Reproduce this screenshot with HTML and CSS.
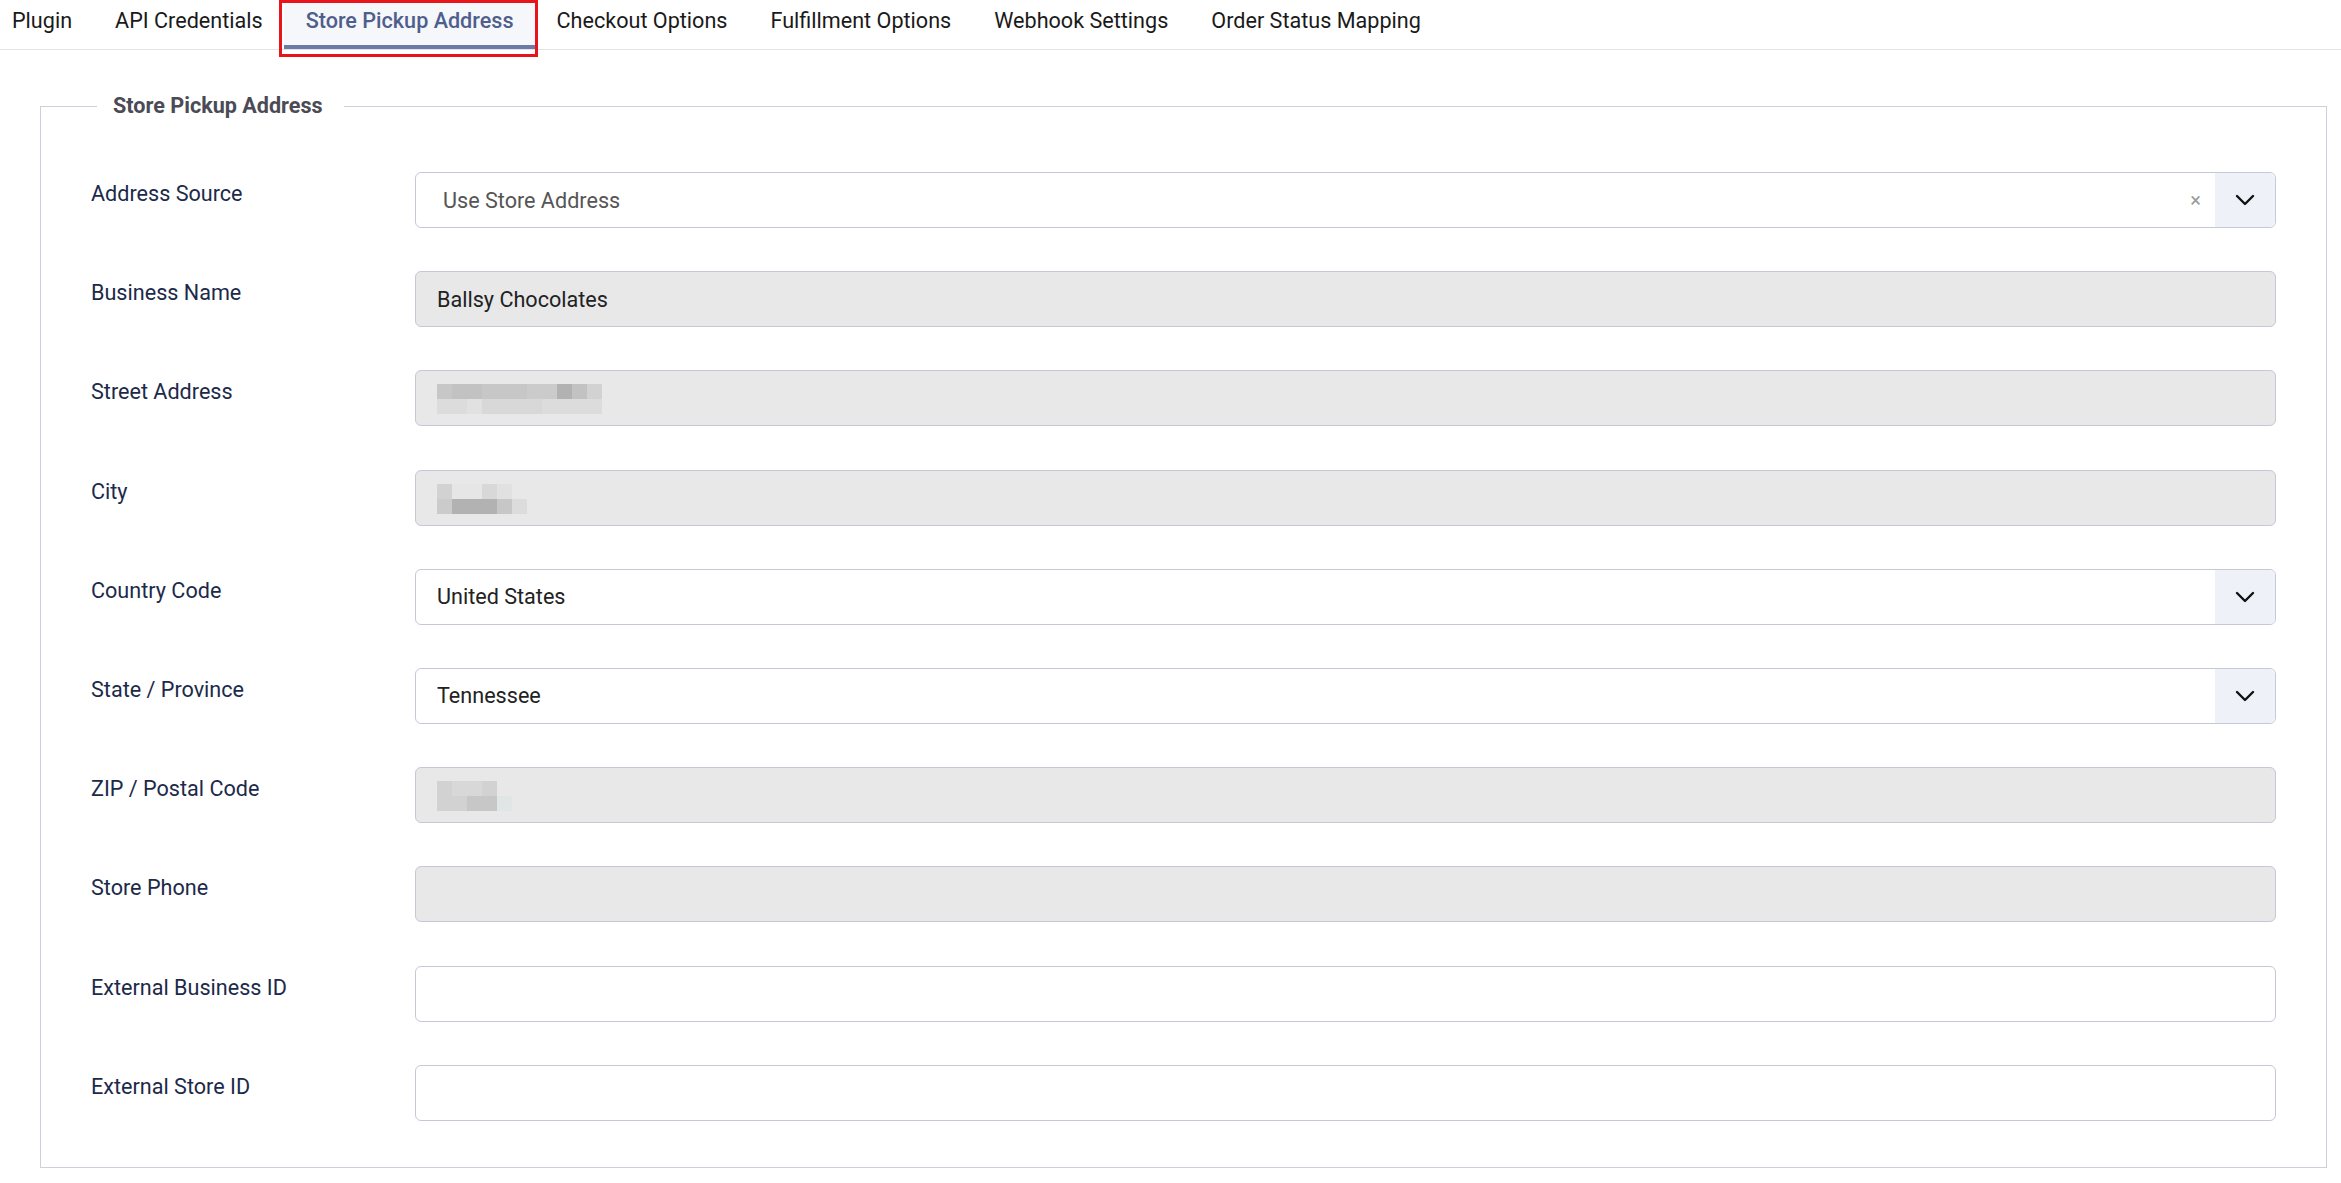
FILE: index.html
```html
<!DOCTYPE html>
<html>
<head>
  <meta charset="UTF-8">
  <meta name="viewport" content="width=device-width, initial-scale=1.0">
  <title>Store Pickup Address</title>
  <link rel="stylesheet" href="styles.css">
</head>
<body>
  <nav class="tabs">
    <a class="tab">Plugin</a>
    <a class="tab">API Credentials</a>
    <a class="tab active">Store Pickup Address<span class="highlight"></span></a>
    <a class="tab">Checkout Options</a>
    <a class="tab">Fulfillment Options</a>
    <a class="tab">Webhook Settings</a>
    <a class="tab">Order Status Mapping</a>
  </nav>

  <div class="page">
    <fieldset class="panel">
      <legend>Store Pickup Address</legend>

      <div class="form-grid">
        <label class="field-label">Address Source</label>
        <div class="select select-clearable">
          <span class="select-value muted">Use Store Address</span>
          <span class="select-clear">&times;</span>
          <span class="select-arrow">
            <svg width="20" height="12" viewBox="0 0 20 12"><polyline points="2,2 10,10 18,2" fill="none" stroke="#111" stroke-width="2.4" stroke-linecap="round" stroke-linejoin="round"/></svg>
          </span>
        </div>

        <label class="field-label">Business Name</label>
        <div class="input disabled">Ballsy Chocolates</div>

        <label class="field-label">Street Address</label>
        <div class="input disabled">
          <!-- redacted value -->
          <div class="mosaic">
            <div class="mosaic-row">
              <i class="s3"></i><i class="s2"></i><i class="s2"></i><i class="s3"></i><i class="s3"></i><i class="s3"></i><i class="s4"></i><i class="s4"></i><i class="s1"></i><i class="s2"></i><i class="s5"></i>
            </div>
            <div class="mosaic-row">
              <i class="s7"></i><i class="s7"></i><i class="s8"></i><i class="s6"></i><i class="s6"></i><i class="s6"></i><i class="s6"></i><i class="s7"></i><i class="s7"></i><i class="s7"></i><i class="s7"></i>
            </div>
          </div>
        </div>

        <label class="field-label">City</label>
        <div class="input disabled">
          <div class="mosaic">
            <div class="mosaic-row">
              <i class="s5"></i><i class="s0"></i><i class="s0"></i><i class="s6"></i><i class="s8"></i>
            </div>
            <div class="mosaic-row">
              <i class="s4"></i><i class="s1"></i><i class="s1"></i><i class="s1"></i><i class="s3"></i><i class="s7"></i>
            </div>
          </div>
        </div>

        <label class="field-label">Country Code</label>
        <div class="select">
          <span class="select-value">United States</span>
          <span class="select-arrow">
            <svg width="20" height="12" viewBox="0 0 20 12"><polyline points="2,2 10,10 18,2" fill="none" stroke="#111" stroke-width="2.4" stroke-linecap="round" stroke-linejoin="round"/></svg>
          </span>
        </div>

        <label class="field-label">State / Province</label>
        <div class="select">
          <span class="select-value">Tennessee</span>
          <span class="select-arrow">
            <svg width="20" height="12" viewBox="0 0 20 12"><polyline points="2,2 10,10 18,2" fill="none" stroke="#111" stroke-width="2.4" stroke-linecap="round" stroke-linejoin="round"/></svg>
          </span>
        </div>

        <label class="field-label">ZIP / Postal Code</label>
        <div class="input disabled">
          <div class="mosaic">
            <div class="mosaic-row">
              <i class="s5"></i><i class="s6"></i><i class="s6"></i><i class="s5"></i>
            </div>
            <div class="mosaic-row">
              <i class="s5"></i><i class="s5"></i><i class="s3"></i><i class="s3"></i><i class="s9"></i>
            </div>
          </div>
        </div>

        <label class="field-label">Store Phone</label>
        <div class="input disabled"></div>

        <label class="field-label">External Business ID</label>
        <div class="input"></div>

        <label class="field-label">External Store ID</label>
        <div class="input"></div>
      </div>
    </fieldset>
  </div>
</body>
</html>
```

FILE: styles.css
```css
* {
  margin: 0;
  padding: 0;
  box-sizing: border-box;
}

body {
  font-family: Roboto, 'Liberation Sans', sans-serif;
  font-size: 21.6px;
  color: #1c2a4a;
  background: #fff;
}

/* top tab strip */
.tabs {
  display: flex;
  height: 50px;
  border-bottom: 1px solid #e2e3ea;
}

.tab {
  position: relative;
  display: flex;
  align-items: center;
  height: 49px;
  padding: 0 21.5px 9px;
  color: #1a1a1a;
  white-space: nowrap;
  cursor: pointer;
}

.tab:first-child {
  padding-left: 12px;
}

.tab.active {
  color: #4f5f8c;
  font-weight: 500;
  background: #f6f7fb;
  border-bottom: 4px solid #6c7aa6;
  padding-bottom: 5px;
}

/* red marker around the current tab */
.highlight {
  position: absolute;
  left: -5px;
  right: -3px;
  top: 0;
  height: 57px;
  border: 3px solid #e8141b;
  pointer-events: none;
}

.page {
  padding: 40px 14px 20px 40px;
}

.panel {
  border: 1px solid #cdcfdb;
  padding: 0 50px 46px;
}

.panel legend {
  margin-left: 6px;
  padding: 0 21px 0 16px;
  font-weight: 700;
  color: #4a4b55;
  line-height: 32px;
}

.form-grid {
  display: grid;
  grid-template-columns: 324px 1fr;
  row-gap: 43.2px;
  margin-top: 50px;
}

.field-label {
  padding-top: 6px;
  line-height: 32px;
  color: #1c2a4a;
}

.input,
.select {
  height: 56px;
  border: 1px solid #c6c8d4;
  border-radius: 6px;
  background: #fff;
  display: flex;
  align-items: center;
  padding: 0 21px;
  color: #222;
}

.input.disabled {
  background: #e8e8e9;
}

.select {
  padding: 0;
  overflow: hidden;
}

.select-value {
  flex: 1;
  padding-left: 21px;
}

.select-clearable .select-value {
  padding-left: 27px;
}

.select-value.muted {
  color: #555;
}

.select-clear {
  color: #9a9a9a;
  font-size: 20px;
  margin-right: 14px;
}

.select-arrow {
  width: 60px;
  height: 100%;
  background: #eff1f8;
  display: flex;
  align-items: center;
  justify-content: center;
}

/* pixelated placeholder for hidden values */
.mosaic {
  display: flex;
  flex-direction: column;
  margin-top: 2px;
}

.mosaic-row {
  display: flex;
}

.mosaic-row i {
  width: 15px;
  height: 15px;
}

.s0 { background: #e6e6e7; }
.s1 { background: #b2b2b3; }
.s2 { background: #c2c2c3; }
.s3 { background: #c7c7c8; }
.s4 { background: #cbcbcc; }
.s5 { background: #d2d2d3; }
.s6 { background: #d8d8d9; }
.s7 { background: #dcdcdd; }
.s8 { background: #e1e1e2; }
.s9 { background: #e0e5e5; }
```
